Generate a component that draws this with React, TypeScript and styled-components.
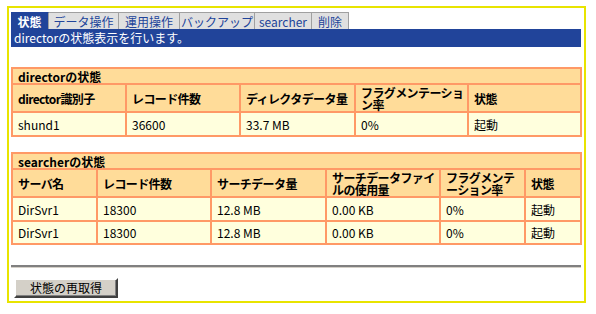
import React from "react";
import styled, { createGlobalStyle } from "styled-components";

const Global = createGlobalStyle`
  html, body { margin: 0; padding: 0; background: #ffffff; }
  body {
    font-family: "Noto Sans CJK JP", "Noto Sans", sans-serif;
    font-size: 12px;
    color: #000;
  }
`;

const Frame = styled.div`
  box-sizing: border-box;
  margin: 6px 0 0 7px;
  width: 579px;
  height: 297px;
  border: 2px solid #e8e400;
  padding: 4px 3px 0 2px;
  display: flex;
  flex-direction: column;
`;

const TabBar = styled.div`
  display: flex;
  height: 17px;
`;

const Tab = styled.div<{ $active?: boolean; $w: number }>`
  box-sizing: border-box;
  width: ${(p) => p.$w}px;
  height: 17px;
  display: flex;
  align-items: center;
  justify-content: center;
  font-size: 12px;
  line-height: 17px;
  white-space: nowrap;
  background: ${(p) => (p.$active ? "#21449a" : "#e0e0e0")};
  color: ${(p) => (p.$active ? "#ffffff" : "#21449a")};
  font-weight: ${(p) => (p.$active ? 700 : 400)};
  border-top: 1px solid ${(p) => (p.$active ? "#21449a" : "#a0a0a0")};
  border-right: 1px solid #a0a0a0;
`;

const InfoBar = styled.div`
  height: 18px;
  background: #21449a;
  color: #ffffff;
  font-size: 12px;
  line-height: 17px;
  padding-left: 3px;
`;

const Table = styled.table<{ $mt: number }>`
  margin-top: ${(p) => p.$mt}px;
  width: 569px;
  border-collapse: collapse;
  table-layout: fixed;
  font-size: 12px;
  border: 2px solid #ff9966;
`;

const TitleCell = styled.th`
  background: #ffdc99;
  border: 2px solid #ff9966;
  text-align: left;
  font-weight: 700;
  height: 12px;
  line-height: 13px;
  padding: 1px 5px 0;
`;

const HeadCell = styled.th`
  background: #ffdc99;
  border: 2px solid #ff9966;
  text-align: left;
  font-weight: 700;
  letter-spacing: -0.6px;
  height: 25px;
  line-height: 12px;
  padding: 1px 2px 0 5px;
  vertical-align: middle;
`;

const DataCell = styled.td<{ $h?: number }>`
  background: #ffffdd;
  border: 2px solid #ff9966;
  height: ${(p) => p.$h ?? 21}px;
  line-height: 14px;
  padding: 1px 5px 0;
  vertical-align: middle;
`;

const Rule = styled.div`
  margin-top: 20px;
  width: 570px;
  border-top: 2px solid #808080;
  border-bottom: 1px solid #d4d0c8;
`;

const Button = styled.button`
  margin: 10px 0 0 3px;
  box-sizing: border-box;
  width: 104px;
  height: 20px;
  background: #d4d0c8;
  border: 2px solid;
  border-color: #ffffff #404040 #404040 #ffffff;
  box-shadow: inset -1px -1px 0 #808080;
  font-family: "Noto Sans CJK JP", "Noto Sans", sans-serif;
  font-size: 12px;
  line-height: 14px;
  color: #000;
  padding: 0;
  cursor: pointer;
`;

const tabs = [
  { label: "状態", w: 38, active: true },
  { label: "データ操作", w: 70 },
  { label: "運用操作", w: 61 },
  { label: "バックアップ", w: 75 },
  { label: "searcher", w: 57 },
  { label: "削除", w: 37 },
];

const dirCols = [114, 114, 115, 113, 113];
const dirHead = ["director識別子", "レコード件数", "ディレクタデータ量", "フラグメンテーション率", "状態"];
const dirRow = ["shund1", "36600", "33.7 MB", "0%", "起動"];

const srchCols = [85, 114, 115, 114, 85, 56];
const srchHead = ["サーバ名", "レコード件数", "サーチデータ量", "サーチデータファイルの使用量", "フラグメンテーション率", "状態"];
const srchRows = [
  ["DirSvr1", "18300", "12.8 MB", "0.00 KB", "0%", "起動"],
  ["DirSvr1", "18300", "12.8 MB", "0.00 KB", "0%", "起動"],
];

export default function App() {
  return (
    <>
      <Global />
      <Frame>
        <TabBar>
          {tabs.map((t) => (
            <Tab key={t.label} $w={t.w} $active={t.active}>
              {t.label}
            </Tab>
          ))}
        </TabBar>
        <InfoBar>directorの状態表示を行います。</InfoBar>

        <Table $mt={20}>
          <colgroup>
            {dirCols.map((w, i) => (
              <col key={i} style={{ width: w }} />
            ))}
          </colgroup>
          <thead>
            <tr>
              <TitleCell colSpan={5}>directorの状態</TitleCell>
            </tr>
            <tr>
              {dirHead.map((h) => (
                <HeadCell key={h}>{h}</HeadCell>
              ))}
            </tr>
          </thead>
          <tbody>
            <tr>
              {dirRow.map((c, i) => (
                <DataCell key={i}>{c}</DataCell>
              ))}
            </tr>
          </tbody>
        </Table>

        <Table $mt={15}>
          <colgroup>
            {srchCols.map((w, i) => (
              <col key={i} style={{ width: w }} />
            ))}
          </colgroup>
          <thead>
            <tr>
              <TitleCell colSpan={6}>searcherの状態</TitleCell>
            </tr>
            <tr>
              {srchHead.map((h) => (
                <HeadCell key={h}>{h}</HeadCell>
              ))}
            </tr>
          </thead>
          <tbody>
            {srchRows.map((r, ri) => (
              <tr key={ri}>
                {r.map((c, i) => (
                  <DataCell key={i} $h={ri === 1 ? 20 : 21}>
                    {c}
                  </DataCell>
                ))}
              </tr>
            ))}
          </tbody>
        </Table>

        <Rule />
        <Button>状態の再取得</Button>
      </Frame>
    </>
  );
}
